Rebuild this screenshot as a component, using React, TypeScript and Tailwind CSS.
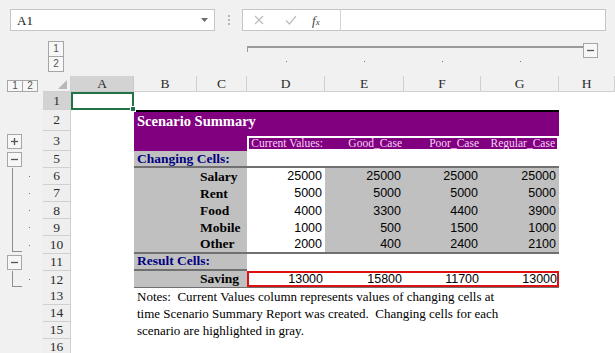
import React from "react";

const COLS = "grid grid-cols-[43px_28px_63px_63px_50px_78px_79px_77px_78px_56px]";
const SERIF = "font-['Liberation_Serif','Times_New_Roman',serif]";
const SANS = "font-['Liberation_Sans',Arial,sans-serif]";

function PlusMinus({ plus }: { plus?: boolean }) {
  return (
    <div className="w-[15px] h-[15px] border border-[#a6a6a6] bg-[#f7f7f7] flex items-center justify-center">
      <svg width="9" height="9" viewBox="0 0 9 9">
        <path d="M1 4.5H8" stroke="#555" strokeWidth="1.3" />
        {plus && <path d="M4.5 1V8" stroke="#555" strokeWidth="1.3" />}
      </svg>
    </div>
  );
}

type GK = "none" | "plus" | "minus" | "line" | "end";

function Gutter({ kind, dot }: { kind: GK; dot?: boolean }) {
  return (
    <div className="h-full flex">
      <div className="w-[22px] h-full flex">
        {kind === "line" && <div className="ml-[12px] w-px h-full bg-[#8e8e8e]" />}
        {kind === "end" && (
          <div className="ml-[12px] w-[10px] h-[calc(100%-2px)] border-l border-b border-[#8e8e8e]" />
        )}
        {kind === "plus" && (
          <div className="ml-[7px] self-center">
            <PlusMinus plus />
          </div>
        )}
        {kind === "minus" && (
          <div className="ml-[7px] self-center">
            <PlusMinus />
          </div>
        )}
      </div>
      <div className="h-full flex items-center">
        {dot && <div className="ml-[7px] w-px h-px bg-[#7a7a7a]" />}
      </div>
    </div>
  );
}

function RowHdr({ n, sel }: { n: string; sel?: boolean }) {
  return (
    <div
      className={`h-full flex items-center justify-center border-b border-r border-[#d0d0d0] text-[13.5px] leading-none text-[#2b2b2b] ${SERIF} ${
        sel ? "bg-[#d3d3d3]" : "bg-[#efefef]"
      }`}
    >
      {n}
    </div>
  );
}

function Row({ h, children }: { h: string; children: React.ReactNode }) {
  return <div className={`${COLS} ${h}`}>{children}</div>;
}

function Lvl({ n, cls }: { n: string; cls: string }) {
  return (
    <div
      className={`${cls} border border-[#a6a6a6] bg-[#f7f7f7] flex items-center justify-center text-[10px] leading-none text-[#555] ${SANS}`}
    >
      {n}
    </div>
  );
}

function FormulaBar() {
  return (
    <div className="h-[35px] flex items-start pt-[9px] pl-[10px]">
      <div className="w-[205px] h-[22px] bg-white border border-[#c6c6c6] flex items-center justify-between pl-[6px] pr-[6px]">
        <span className={`${SERIF} text-[13px] text-[#222] leading-none`}>A1</span>
        <svg width="7" height="4" viewBox="0 0 7 4">
          <path d="M0 0H7L3.5 4Z" fill="#6b6b6b" />
        </svg>
      </div>
      <div className="w-[27px] h-[22px] flex flex-col items-center justify-center gap-[2px]">
        <div className="w-[2px] h-[2px] bg-[#b5b5b5]" />
        <div className="w-[2px] h-[2px] bg-[#b5b5b5]" />
        <div className="w-[2px] h-[2px] bg-[#b5b5b5]" />
      </div>
      <div className="w-[364px] h-[22px] bg-white border border-[#c6c6c6] flex">
        <div className="w-[98px] h-full flex items-center border-r border-[#d4d4d4]">
          <svg className="ml-[11px]" width="10" height="10" viewBox="0 0 10 10">
            <path d="M1 1L9 9M9 1L1 9" stroke="#bcbcbc" strokeWidth="1.2" />
          </svg>
          <svg className="ml-[21px]" width="12" height="10" viewBox="0 0 12 10">
            <path d="M1 5.5L4.5 9L11 1" stroke="#bcbcbc" strokeWidth="1.2" fill="none" />
          </svg>
          <span className={`ml-[15px] italic text-[13px] leading-none text-[#444] ${SERIF}`}>
            f<span className="text-[9px]">x</span>
          </span>
        </div>
        <div className="flex-1" />
      </div>
    </div>
  );
}

function TopBand() {
  return (
    <div className={`${COLS} h-[41px]`}>
      <div />
      <div className="pl-[5px] pt-[6px] flex flex-col">
        <Lvl n="1" cls="w-[16px] h-[16px]" />
        <Lvl n="2" cls="w-[16px] h-[16px] -mt-px" />
      </div>
      <div className="col-span-3" />
      <div className="col-span-4 flex flex-col">
        <div className="mt-[11px] h-[6px] border-t-2 border-l border-[#9a9a9a]" />
        <div className="grid grid-cols-[78px_79px_77px_78px] mt-[9px]">
          {[0, 1, 2, 3].map((i) => (
            <div key={i} className="flex justify-center">
              <div className="w-px h-px bg-[#777]" />
            </div>
          ))}
        </div>
      </div>
      <div className="flex items-start">
        <div className="mt-[11px] w-[24px] h-[2px] bg-[#9a9a9a]" />
        <div className="mt-[8px]">
          <PlusMinus />
        </div>
      </div>
    </div>
  );
}

function ColHeaders() {
  const letters = ["B", "C", "D", "E", "F", "G", "H"];
  return (
    <div className={`${COLS} h-[16px]`}>
      <div className="flex pl-[7px] pt-[4px]">
        <Lvl n="1" cls="w-[16px] h-[12px]" />
        <Lvl n="2" cls="w-[16px] h-[12px] -ml-px" />
      </div>
      <div className="border-r border-b border-[#d0d0d0] flex items-end justify-end pr-[3px] pb-[2px]">
        <svg width="9" height="9" viewBox="0 0 9 9">
          <path d="M9 0V9H0Z" fill="#b8b8b8" />
        </svg>
      </div>
      <div
        className={`bg-[#d3d3d3] border-r border-b border-[#c8c8c8] flex items-center justify-center text-[13.5px] leading-none text-[#2b2b2b] ${SERIF}`}
      >
        A
      </div>
      {letters.map((l) => (
        <div
          key={l}
          className={`border-r border-b border-[#d0d0d0] flex items-center justify-center text-[13.5px] leading-none text-[#2b2b2b] ${SERIF}`}
        >
          {l}
        </div>
      ))}
    </div>
  );
}

function Num({ v, gray }: { v: number; gray?: boolean }) {
  return (
    <div
      className={`h-full flex items-center justify-end pr-[3px] text-[12.5px] leading-none text-black ${SANS} ${
        gray ? "bg-[#c0c0c0]" : "bg-white"
      }`}
    >
      {v}
    </div>
  );
}

const data: [string, string, number[]][] = [
  ["6", "Salary", [25000, 25000, 25000, 25000]],
  ["7", "Rent", [5000, 5000, 5000, 5000]],
  ["8", "Food", [4000, 3300, 4400, 3900]],
  ["9", "Mobile", [1000, 500, 1500, 1000]],
  ["10", "Other", [2000, 400, 2400, 2100]],
];

const notes = [
  ["13", "Notes:  Current Values column represents values of changing cells at"],
  ["14", "time Scenario Summary Report was created.  Changing cells for each"],
  ["15", "scenario are highlighted in gray."],
];

export default function App() {
  return (
    <div className="w-[615px] h-[353px] overflow-hidden bg-[#f1f1f1] select-none">
      <FormulaBar />
      <TopBand />
      <ColHeaders />

      <Row h="h-[18px]">
        <Gutter kind="none" />
        <RowHdr n="1" sel />
        <div className="relative bg-white border-2 border-[#217346]">
          <div className="absolute -right-[4px] -bottom-[4px] w-[6px] h-[6px] bg-[#217346] border border-white" />
        </div>
        <div className="col-span-7 bg-white" />
      </Row>

      <Row h="h-[21px]">
        <Gutter kind="none" />
        <RowHdr n="2" />
        <div className="bg-white" />
        <div
          className={`col-span-6 bg-[#800080] border-t-2 border-black flex items-center pl-[3px] text-white font-bold text-[14.5px] leading-none ${SERIF}`}
        >
          Scenario Summary
        </div>
        <div className="bg-white" />
      </Row>

      <Row h="h-[20px]">
        <Gutter kind="plus" />
        <RowHdr n="3" />
        <div className="bg-white" />
        <div className="col-span-2 bg-[#800080]" />
        <div className="col-span-4 bg-[#800080] flex items-end">
          <div
            className={`w-full h-[15px] border-2 border-white grid grid-cols-[76px_79px_77px_76px] text-[11.5px] leading-none text-[#f6d2f6] ${SERIF}`}
          >
            {["Current Values:", "Good_Case", "Poor_Case", "Regular_Case"].map((t) => (
              <div key={t} className="flex items-center justify-end pr-[2px] overflow-hidden whitespace-nowrap">
                {t}
              </div>
            ))}
          </div>
        </div>
        <div className="bg-white" />
      </Row>

      <Row h="h-[17.1px]">
        <Gutter kind="minus" />
        <RowHdr n="5" />
        <div className="bg-white" />
        <div
          className={`col-span-2 bg-[#c0c0c0] border-b-2 border-[#707070] flex items-center pl-[3px] text-[#000080] font-bold text-[13.5px] leading-none whitespace-nowrap ${SERIF}`}
        >
          Changing Cells:
        </div>
        <div className="col-span-4 bg-white border-b-2 border-[#707070]" />
        <div className="bg-white" />
      </Row>

      {data.map(([n, label, vals], idx) => {
        const last = idx === data.length - 1;
        return (
          <Row key={n} h="h-[17.1px]">
            <Gutter kind={last ? "end" : "line"} dot />
            <RowHdr n={n} />
            <div className="bg-white" />
            <div
              className={`col-span-2 bg-[#c0c0c0] flex items-center pl-[66px] font-bold text-[13.5px] leading-none text-black ${SERIF} ${
                last ? "border-b-2 border-[#707070]" : ""
              }`}
            >
              {label}
            </div>
            <div
              className={`col-span-4 grid grid-cols-[78px_79px_77px_78px] ${last ? "border-b-2 border-[#707070]" : ""}`}
            >
              {vals.map((v, i) => (
                <Num key={i} v={v} gray={i > 0} />
              ))}
            </div>
            <div className="bg-white" />
          </Row>
        );
      })}

      <Row h="h-[17.1px]">
        <Gutter kind="minus" />
        <RowHdr n="11" />
        <div className="bg-white" />
        <div
          className={`col-span-2 bg-[#c0c0c0] border-b-2 border-[#707070] flex items-center pl-[3px] text-[#000080] font-bold text-[13.5px] leading-none whitespace-nowrap ${SERIF}`}
        >
          Result Cells:
        </div>
        <div className="col-span-4 bg-white" />
        <div className="bg-white" />
      </Row>

      <Row h="h-[17.1px]">
        <Gutter kind="end" dot />
        <RowHdr n="12" />
        <div className="bg-white" />
        <div
          className={`col-span-2 bg-[#c0c0c0] border-b-2 border-[#707070] flex items-center pl-[66px] font-bold text-[13.5px] leading-none text-black ${SERIF}`}
        >
          Saving
        </div>
        <div className="col-span-4 bg-white border-b-2 border-[#707070]">
          <div className="h-full border-2 border-[#dd1111] grid grid-cols-[76px_79px_77px_76px]">
            {[13000, 15800, 11700, 13000].map((v, i) => (
              <div
                key={i}
                className={`flex items-center justify-end ${i === 3 ? "pr-0" : "pr-[2px]"} overflow-hidden text-[12.5px] leading-none text-black ${SANS}`}
              >
                {v}
              </div>
            ))}
          </div>
        </div>
        <div className="bg-white" />
      </Row>

      {notes.map(([n, t]) => (
        <Row key={n} h="h-[17.1px]">
          <Gutter kind="none" />
          <RowHdr n={n} />
          <div className="bg-white" />
          <div
            className={`col-span-7 bg-white flex items-center pl-[3px] whitespace-pre text-[13px] leading-none text-black ${SERIF}`}
          >
            {t}
          </div>
        </Row>
      ))}

      <Row h="h-[17.1px]">
        <Gutter kind="none" />
        <RowHdr n="16" />
        <div className="col-span-8 bg-white" />
      </Row>
    </div>
  );
}
